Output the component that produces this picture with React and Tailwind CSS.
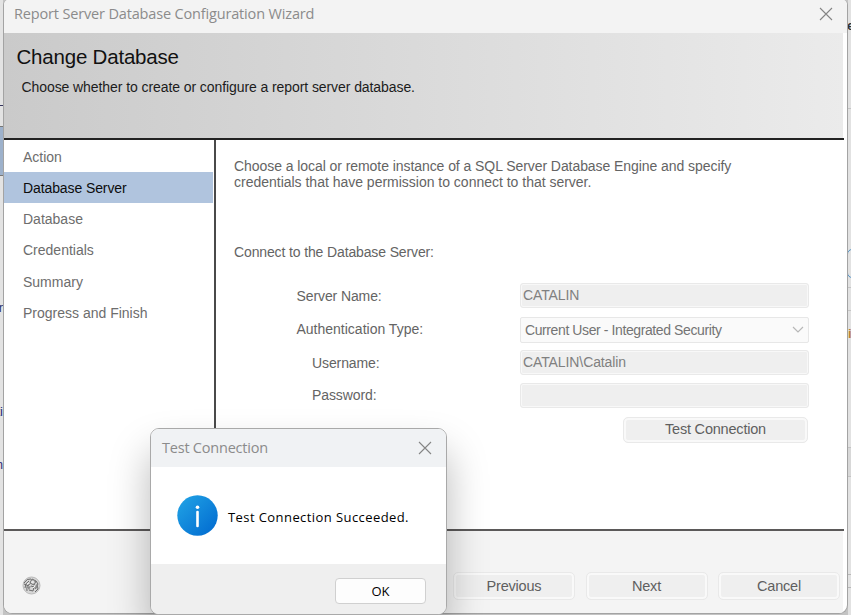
const steps = ["Action", "Database Server", "Database", "Credentials", "Summary", "Progress and Finish"];

function Close() {
  return (
    <svg width="14" height="14" viewBox="0 0 14 14" fill="none" stroke="#858585" strokeWidth="1.1" className="block">
      <path d="M1 1 13 13M13 1 1 13" />
    </svg>
  );
}

function Field({ children }) {
  return (
    <div className="flex h-[25px] w-[289px] items-center rounded-[3px] border border-[#e9e9e9] bg-[#efefef] pl-[2px] text-[14px] leading-4 tracking-[-0.1px] text-[#808080] shadow-[inset_0_0_0_1px_#f8f8f8]">
      {children}
    </div>
  );
}

function Button({ children, className = "" }) {
  return (
    <button className={"flex items-center justify-center rounded-[5px] border border-[#e9e9e9] bg-[#efefef] pb-px text-[14.5px] leading-4 tracking-[-0.2px] text-[#5f5f5f] shadow-[inset_0_0_0_2px_#f9f9f9] " + className}>
      {children}
    </button>
  );
}

function TitleBar() {
  return (
    <div className="flex h-[33px] items-start justify-between bg-[#f3f3f3] pl-[10px] pr-[14px] pt-[4px]">
      <span className="whitespace-nowrap font-['Open_Sans','Noto_Sans',sans-serif] text-[14.5px] leading-5 tracking-[-0.16px] text-[#8b8b8b]">Report Server Database Configuration Wizard</span>
      <span className="pt-[3px]"><Close /></span>
    </div>
  );
}

function Header() {
  return (
    <div className="mr-[4px] h-[105px] bg-linear-to-r from-[#cacaca] to-[#ebebeb] pt-[12px]">
      <h1 className="pl-[12.5px] text-[20.5px] leading-6 tracking-[-0.2px] text-[#111]">Change Database</h1>
      <p className="whitespace-nowrap pl-[17.5px] pt-[10px] text-[14px] leading-4 tracking-[-0.08px] text-[#1c1c1c]">Choose whether to create or configure a report server database.</p>
    </div>
  );
}

function Sidebar() {
  return (
    <nav className="w-[210px] pt-px">
      {steps.map((s, i) => (
        <div key={s} className={"mr-px flex h-[31.25px] items-center pl-[19px] pt-px text-[14px] leading-4 " + (i === 1 ? "bg-[#b0c4de] tracking-[-0.1px] text-[#0c0c0c]" : "text-[#6d6d6d]")}>
          {s}
        </div>
      ))}
    </nav>
  );
}

function Form() {
  return (
    <main className="flex-1 border-l-2 border-[#4a4a4a] pl-[18px] pt-[18px] text-[14px] text-[#646464]">
      <p className="whitespace-nowrap leading-[16.5px] tracking-[-0.065px]">
        Choose a local or remote instance of a SQL Server Database Engine and specify
        <br />
        <span className="tracking-[-0.01px]">credentials that have permission to connect to that server.</span>
      </p>
      <p className="pt-[53px] leading-4 tracking-[-0.13px]">Connect to the Database Server:</p>
      <div className="mt-[23px] grid grid-cols-[286px_289px] gap-y-2">
        <span className="pl-[62.5px] pt-[5px] leading-4 tracking-[-0.1px]">Server Name:</span>
        <Field>CATALIN</Field>
        <span className="pl-[62.5px] pt-[5px] leading-4">Authentication Type:</span>
        <div className="-mb-px mt-px flex h-[26px] w-[289px] items-center justify-between rounded-[2px] border border-[#e7e7e7] bg-[#fafafa] pl-[4px] pr-[4px] leading-4 text-[#747474]">
          <span className="tracking-[-0.4px]">Current User - Integrated Security</span>
          <svg width="12" height="8" viewBox="0 0 12 8" fill="none" stroke="#b7b7b7" strokeWidth="1.2"><path d="m1 1 5 5 5-5" /></svg>
        </div>
        <span className="pl-[78px] pt-[5px] leading-4 tracking-[-0.1px]">Username:</span>
        <Field>CATALIN\Catalin</Field>
        <span className="pl-[78px] pt-[4px] leading-4 tracking-[-0.1px]">Password:</span>
        <Field />
      </div>
      <Button className="ml-[389px] mt-[9px] h-[26px] w-[185px]">Test Connection</Button>
    </main>
  );
}

function Footer() {
  return (
    <footer className="mr-[4px] flex h-[82px] items-start bg-[#f4f4f4] pl-[18px] pt-[41px]">
      <svg width="19" height="19" viewBox="0 0 19 19" className="mt-[4px]">
        <circle cx="9.5" cy="9.5" r="8.5" fill="#d6d6d6" stroke="#b9b9b9" />
        <path d="M2 7Q5 2 9 3M3 12Q3 7 7 5M5 15Q4 9 8 8M2 8l5 2M10 3l4 2-2 4-4-2zM14 5l2 3-3 5M9 10l3 1-1 4-4-1M15 8l1 5-3 3" fill="none" stroke="#6a6a6a" strokeWidth="1" />
        <path d="m9 4 4 1-2 3zM5 11l4-1-2 4zM13 10l3-2-1 5z" fill="#8b8b8b" />
        <path d="m10 5 2 1-2 1zM5 8l2-1M11 12l2-2" fill="none" stroke="#f4f4f4" />
      </svg>
      <div className="ml-auto flex gap-[10.5px] pr-[3px]">
        <Button className="h-[28px] w-[122px]">Previous</Button>
        <Button className="h-[28px] w-[122px]">Next</Button>
        <Button className="h-[28px] w-[122px]">Cancel</Button>
      </div>
    </footer>
  );
}

function Dialog() {
  return (
    <section className="absolute left-[150px] top-[428px] w-[297px] overflow-hidden rounded-[9px] border border-[#a9a9a9] bg-white shadow-[0_24px_40px_0px_rgba(0,0,0,0.28)]">
      <div className="flex h-[38px] items-start justify-between bg-[#f0f2f4] pl-[11px] pr-[14px] pt-[9px]">
        <span className="font-['Open_Sans','Noto_Sans',sans-serif] text-[14.5px] leading-5 tracking-[-0.22px] text-[#8b8b8b]">Test Connection</span>
        <span className="pt-[3px]"><Close /></span>
      </div>
      <div className="flex h-[97px] items-center pl-[26px]">
        <svg width="41" height="41" viewBox="0 0 41 41">
          <defs><linearGradient id="info" x1="0" y1="0" x2="1" y2="1"><stop stopColor="#22a5e6" /><stop offset="1" stopColor="#0068cf" /></linearGradient></defs>
          <circle cx="20.5" cy="20.5" r="20.2" fill="url(#info)" />
          <circle cx="20.5" cy="12.2" r="1.8" fill="#fff" />
          <path d="M20.5 17v14" stroke="#fff" strokeWidth="2.6" strokeLinecap="round" />
        </svg>
        <span className="whitespace-nowrap pl-[10px] pt-[2px] font-['Open_Sans','Noto_Sans',sans-serif] text-[13px] font-medium leading-4 tracking-[0.42px] text-black">Test Connection Succeeded.</span>
      </div>
      <div className="flex h-[50px] items-start justify-end bg-[#efefef] pr-[20px] pt-[14px]">
        <button className="flex h-[26px] w-[91px] items-center justify-center rounded-[4px] border border-[#d0d0d0] bg-[#fdfdfd] font-['Open_Sans','Noto_Sans',sans-serif] text-[13px] font-medium leading-4 text-black">OK</button>
      </div>
    </section>
  );
}

function Fragment({ className, children }) {
  return <span className={"absolute whitespace-nowrap text-[13px] leading-4 " + className}>{children}</span>;
}

export default function App() {
  return (
    <div className="relative flex h-[615px] w-[851px] overflow-hidden bg-[#c3c3c3] font-['Liberation_Sans',Arial,sans-serif]">
      <div className="relative h-full w-[3px] shrink-0 overflow-hidden bg-[#e3e3e3]">
        <div className="mt-[105px] h-px bg-[#34345c]" />
        <div className="mt-[20px] h-[50px] border-y border-[#777] bg-[#9db1cb]" />
        <Fragment className="right-0 top-[300px] text-[#34346a]">r</Fragment>
        <Fragment className="right-0 top-[404px] text-[#252c78]">ti</Fragment>
        <Fragment className="right-0 top-[457px] text-[#34347c]">m</Fragment>
      </div>
      <div className="h-[614px] w-[845px] shrink-0 overflow-hidden rounded-b-[9px] rounded-t-[5px] border-x border-b border-[#a3a3a3] bg-white">
        <TitleBar />
        <Header />
        <div className="mr-[3px] h-[1.5px] bg-[#222]" />
        <div className="flex h-[389.5px]">
          <Sidebar />
          <Form />
        </div>
        <div className="mr-[3px] h-[2px] bg-[#5b5959]" />
        <Footer />
      </div>
      <div className="relative h-full w-[3px] shrink-0 overflow-hidden bg-[#e2e2e2]">
        <Fragment className="left-[-1px] top-[18px] font-bold text-[#333]">e</Fragment>
        <div className="mt-[108px] h-px bg-[#c5c5c5]" />
        <div className="-ml-px mt-[140px] h-[29px] w-[20px] rounded-[5px] border border-[#4f91c5]" />
        <div className="mt-[9px] h-[24px] border-y border-[#c5c5c5]" />
        <Fragment className="left-0 top-[326px] font-bold text-[#bd812f]">i</Fragment>
        <div className="mt-[136px] h-[30px] border-y border-[#c3c3c3] bg-[#d8d8d8]" />
        <div className="mt-[97px] h-[14px] border-y border-[#b8b8b8]" />
      </div>
      <Dialog />
    </div>
  );
}
